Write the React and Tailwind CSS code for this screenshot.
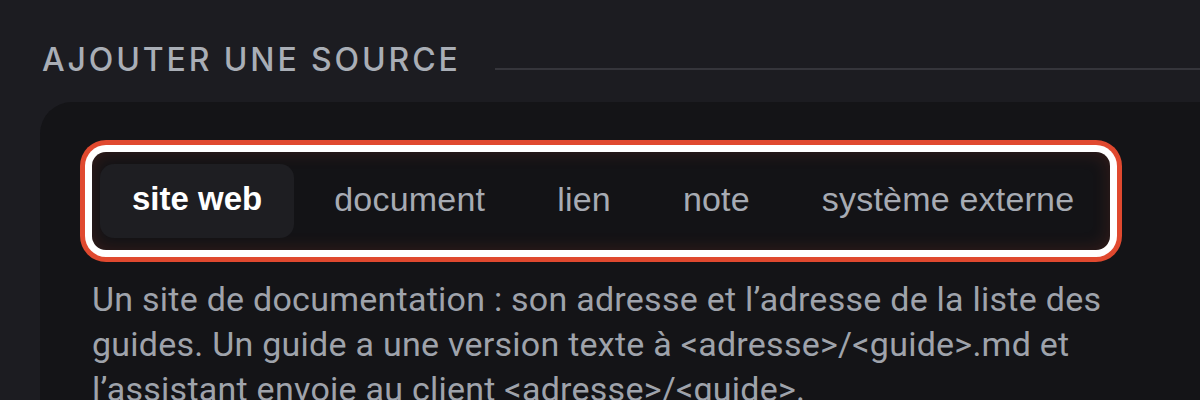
import React from "react";

const tabs = ["site web", "document", "lien", "note", "système externe"];

export default function App() {
  return (
    <div className="w-[1200px] h-[400px] overflow-hidden bg-[#1c1c21] pl-[40px] pt-[38px]">
      <div className="flex items-end pl-[2px]">
        <h2 className="font-['Inter',sans-serif] text-[32px] leading-[44px] font-medium tracking-[0.09em] text-[#a9aeb6] whitespace-nowrap">
          AJOUTER UNE SOURCE
        </h2>
        <div className="flex-1 h-[2px] bg-[#35353b] ml-[34px] mb-[12px]" />
      </div>
      <div className="mt-[20px] rounded-tl-[32px] bg-[#141417] pl-[52px] pt-[50px] pr-[40px] h-[400px]">
        <div className="w-[1018px] h-[98px] rounded-[14px] bg-[#131316] flex items-center gap-[8px] px-[8px] shadow-[0_0_0_7px_#ffffff,0_0_0_12px_#e0492f,inset_0_0_18px_rgba(224,73,47,0.18)]">
          {tabs.map((t, i) => (
            <div
              key={t}
              className={
                i === 0
                  ? "h-[74px] px-[32px] flex items-center whitespace-nowrap rounded-[14px] bg-[#1e1e22] text-white font-bold font-['Liberation_Sans',Arial,sans-serif] text-[33px] pb-[4px]"
                  : "h-[74px] px-[32px] flex items-center whitespace-nowrap rounded-[14px] text-[#a7abb3] font-['Liberation_Sans',Arial,sans-serif] text-[34px] tracking-[0.2px] pb-[4px]"
              }
            >
              {t}
            </div>
          ))}
        </div>
        <p className="mt-[27px] w-[1025px] font-['Roboto',sans-serif] text-[34px] tracking-[0.25px] leading-[45px] text-[#9fa3ab]">
          Un site de documentation : son adresse et l’adresse de la liste des guides. Un guide a une version texte à &lt;adresse&gt;/&lt;guide&gt;.md et l’assistant envoie au client &lt;adresse&gt;/&lt;guide&gt;.
        </p>
      </div>
    </div>
  );
}
